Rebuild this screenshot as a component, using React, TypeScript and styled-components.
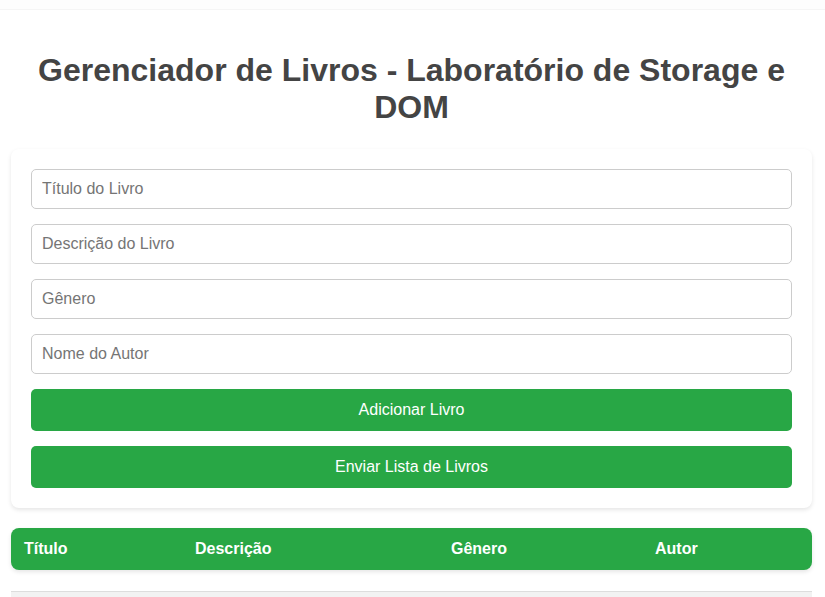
import React from "react";
import styled, { createGlobalStyle } from "styled-components";

const Global = createGlobalStyle`
  html, body { margin: 0; padding: 0; background: #fff; }
  body { font-family: "Liberation Sans", Arial, sans-serif; color: #333; }
  * { box-sizing: border-box; }
`;

const TopBar = styled.div`
  height: 10px;
  background: #fdfdfd;
  border-bottom: 1px solid #f5f5f5;
`;

const Page = styled.div`
  padding: 21px 13px 0 11px;
`;

const Title = styled.h1`
  margin: 21px 0 23px;
  font-size: 32px;
  font-weight: bold;
  text-align: center;
  color: #444;
  line-height: 36.8px;
`;

const Card = styled.div`
  background: #fff;
  border-radius: 8px;
  box-shadow: 0 2px 4px rgba(0, 0, 0, 0.1);
  padding: 20px;
  display: flex;
  flex-direction: column;
  gap: 15px;
`;

const Input = styled.input`
  height: 40px;
  padding: 10px;
  border: 1px solid #ccc;
  border-radius: 5px;
  font-family: "Liberation Sans", Arial, sans-serif;
  font-size: 16px;
  color: #333;
  &::placeholder { color: #757575; }
`;

const Button = styled.button`
  height: 42px;
  border: none;
  border-radius: 5px;
  background: #28a745;
  color: #fff;
  font-family: "Liberation Sans", Arial, sans-serif;
  font-size: 16px;
  cursor: pointer;
`;

const TableHead = styled.div`
  margin-top: 20px;
  height: 42px;
  background: #28a745;
  border-radius: 8px;
  box-shadow: 0 2px 4px rgba(0, 0, 0, 0.1);
  display: grid;
  grid-template-columns: 171px 256px 204px 1fr;
  align-items: center;
`;

const HeadCell = styled.div`
  padding: 0 13px;
  color: #fff;
  font-weight: bold;
  font-size: 16px;
`;

const ListArea = styled.div`
  margin-top: 21px;
  height: 30px;
  background: #f2f2f2;
  border-top: 1px solid #ddd;
`;

export default function App() {
  return (
    <>
      <Global />
      <TopBar />
      <Page>
        <Title>Gerenciador de Livros - Laboratório de Storage e DOM</Title>
        <Card>
          <Input placeholder="Título do Livro" />
          <Input placeholder="Descrição do Livro" />
          <Input placeholder="Gênero" />
          <Input placeholder="Nome do Autor" />
          <Button>Adicionar Livro</Button>
          <Button>Enviar Lista de Livros</Button>
        </Card>
        <TableHead>
          <HeadCell>Título</HeadCell>
          <HeadCell>Descrição</HeadCell>
          <HeadCell>Gênero</HeadCell>
          <HeadCell>Autor</HeadCell>
        </TableHead>
        <ListArea />
      </Page>
    </>
  );
}
